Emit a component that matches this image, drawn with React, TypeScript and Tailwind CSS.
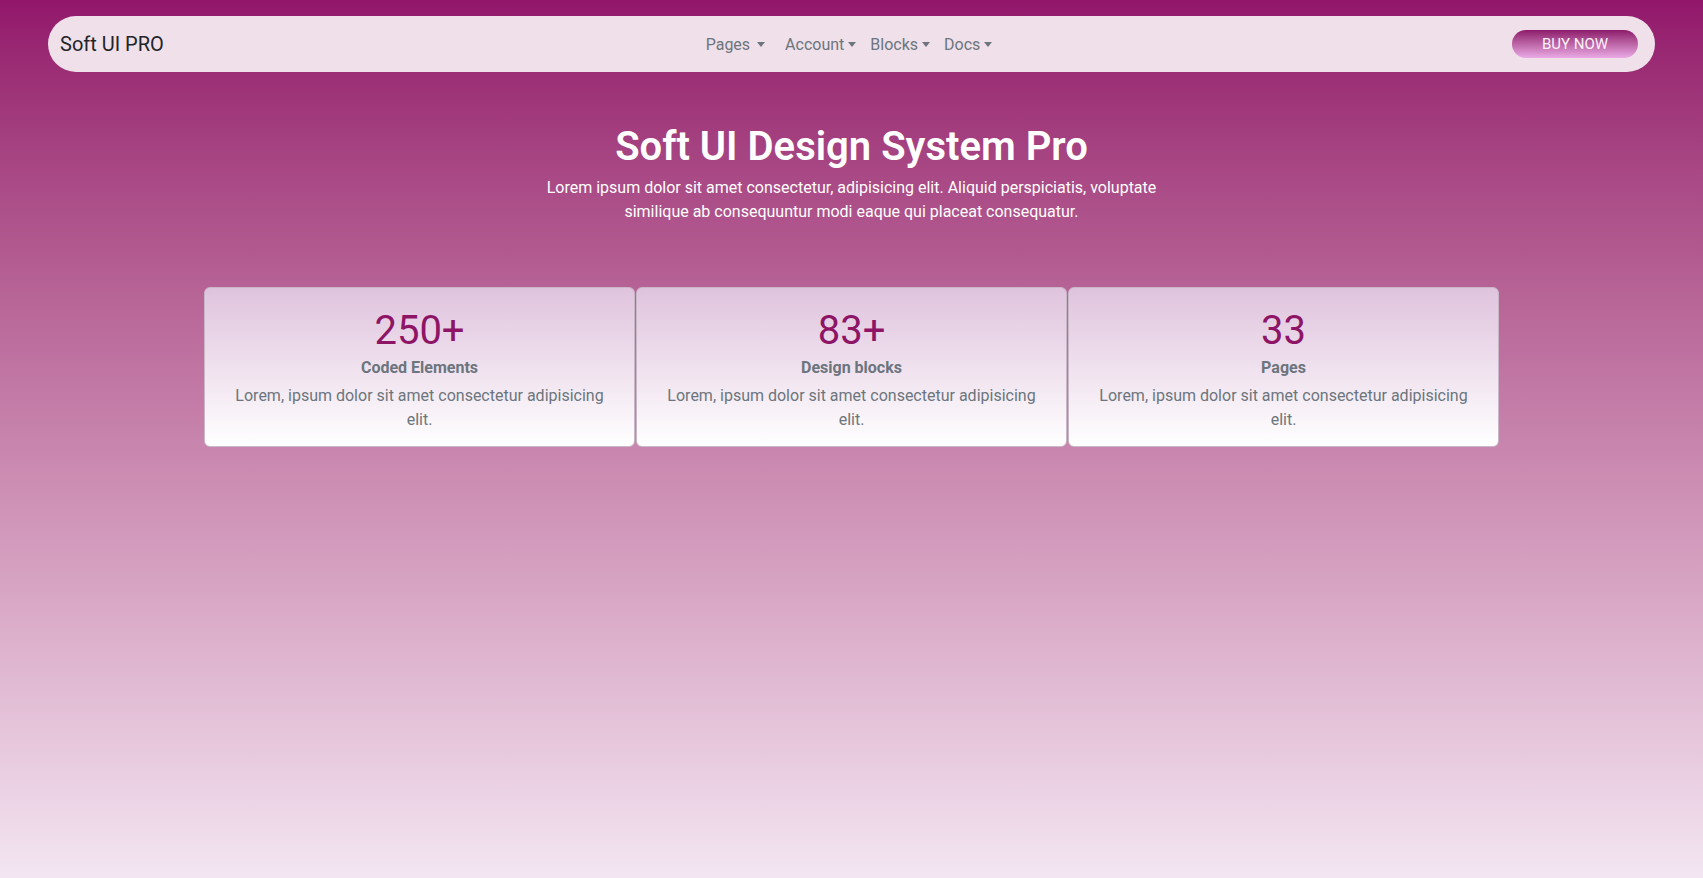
const font = { fontFamily: 'Roboto, "Noto Sans", sans-serif' };

const Caret = () => (
    <span className="ml-[4px] inline-block h-0 w-0 border-l-[4.5px] border-r-[4.5px] border-t-[5px] border-l-transparent border-r-transparent border-t-[#6c757d] align-[3px]"></span>
);

const links = [
    { label: 'Pages', extra: true },
    { label: 'Account', extra: false },
    { label: 'Blocks', extra: false },
    { label: 'Docs', extra: false },
];

const stats = [
    { value: '250+', title: 'Coded Elements' },
    { value: '83+', title: 'Design blocks' },
    { value: '33', title: 'Pages' },
];

const App = () => {
    return (
        <div
            className="min-h-screen bg-gradient-to-b from-[#92166b] to-[#f3e6f2] px-12 pt-4 pb-10"
            style={font}
        >
            <nav className="grid h-14 grid-cols-[1fr_auto_1fr] items-center rounded-[28px] bg-[#efe0ea] pl-3 pr-[17px]">
                <a href="#" className="text-[20px] leading-none text-[#212529]">
                    Soft UI PRO
                </a>
                <ul className="flex items-center pt-[2px] text-[16px] text-[#6c757d]">
                    {links.map((l) => (
                        <li key={l.label}>
                            <a href="#" className={l.extra ? 'mr-[6px] px-[7px]' : 'px-[7px]'}>
                                {l.label}
                                {l.extra && <span className="inline-block w-[3px]"></span>}
                                <Caret />
                            </a>
                        </li>
                    ))}
                </ul>
                <div className="flex justify-end">
                    <button className="h-7 w-[126px] rounded-full bg-gradient-to-b from-[#8c186b] to-[#eaaae6] text-[15px] leading-none text-[#fbf3fa]">
                        BUY NOW
                    </button>
                </div>
            </nav>

            <section className="mt-[51px] text-center text-white">
                <h1 className="text-[40px] font-semibold leading-[48px]">Soft UI Design System Pro</h1>
                <p className="mt-[5px] text-[16px] leading-6">
                    Lorem ipsum dolor sit amet consectetur, adipisicing elit. Aliquid perspiciatis, voluptate
                    <br />
                    similique ab consequuntur modi eaque qui placeat consequatur.
                </p>
            </section>

            <div className="mx-auto mt-[63px] grid w-[1295px] grid-cols-3 gap-[1px]">
                {stats.map((s) => (
                    <div
                        key={s.title}
                        className="rounded-[6px] border border-[#c9b6c6] bg-gradient-to-b from-[#dfc3dd] to-[#ffffff] px-4 pt-[19px] pb-[14px] text-center"
                    >
                        <div className="text-[40px] leading-[48px] text-[#8e1566]">{s.value}</div>
                        <div className="mt-[1px] text-[16px] font-bold leading-6 text-[#6c757d]">{s.title}</div>
                        <p className="mt-[4px] text-[16px] leading-6 text-[#6c757d]">
                            Lorem, ipsum dolor sit amet consectetur adipisicing
                            <br />
                            elit.
                        </p>
                    </div>
                ))}
            </div>
        </div>
    );
};

export default App;
